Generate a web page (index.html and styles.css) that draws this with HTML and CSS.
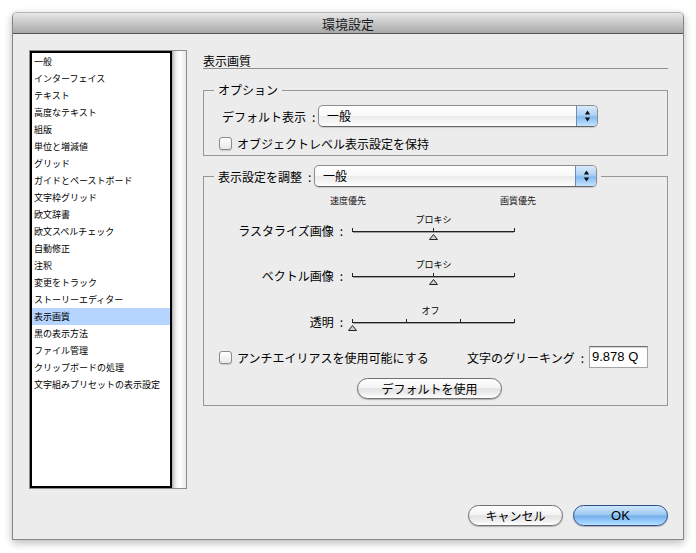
FILE: index.html
```html
<!DOCTYPE html>
<html lang="ja">
<head>
<meta charset="utf-8">
<title>環境設定</title>
<link rel="stylesheet" href="styles.css">
</head>
<body>
<div class="window">
  <div class="titlebar">環境設定</div>
  <div class="body">
    <div class="main">
      <div class="listbox">
        <ul class="list">
          <li>一般</li>
          <li>インターフェイス</li>
          <li>テキスト</li>
          <li>高度なテキスト</li>
          <li>組版</li>
          <li>単位と増減値</li>
          <li>グリッド</li>
          <li>ガイドとペーストボード</li>
          <li>文字枠グリッド</li>
          <li>欧文辞書</li>
          <li>欧文スペルチェック</li>
          <li>自動修正</li>
          <li>注釈</li>
          <li>変更をトラック</li>
          <li>ストーリーエディター</li>
          <li class="sel">表示画質</li>
          <li>黒の表示方法</li>
          <li>ファイル管理</li>
          <li>クリップボードの処理</li>
          <li>文字組みプリセットの表示設定</li>
        </ul>
        <div class="scroll"></div>
      </div>
      <div class="pane">
        <div class="pane-title">表示画質</div>
        <fieldset class="group g1">
          <legend>オプション</legend>
          <div class="row-default">
            <span class="lbl-default">デフォルト表示&#8194;:</span>
            <div class="popup popup-w1">
              <span class="popup-text">一般</span>
              <span class="popup-step"><svg width="7" height="14" viewBox="0 0 7 14"><path d="M0.8 5.5 3.5 1.5 6.2 5.5Z M0.8 8.5 3.5 12.5 6.2 8.5Z" fill="#111"/></svg></span>
            </div>
          </div>
          <div class="check-row"><span class="checkbox"></span><span>オブジェクトレベル表示設定を保持</span></div>
        </fieldset>
        <fieldset class="group g2">
          <legend>
            <span class="lbl-adjust">表示設定を調整&#8194;:</span>
            <span class="popup popup-w2">
              <span class="popup-text">一般</span>
              <span class="popup-step"><svg width="7" height="14" viewBox="0 0 7 14"><path d="M0.8 5.5 3.5 1.5 6.2 5.5Z M0.8 8.5 3.5 12.5 6.2 8.5Z" fill="#111"/></svg></span>
            </span>
          </legend>
          <div class="speed"><span>速度優先</span><span>画質優先</span></div>
          <div class="slider s1">
            <span class="val">プロキシ</span>
            <span class="slabel">ラスタライズ画像&#8194;:</span>
            <svg class="track" width="163" height="15" viewBox="0 0 163 15">
              <path d="M0.5 2v4M162.5 2v4M81.5 2v4M0 5.5h163" stroke="#222" fill="none"/>
              <path d="M1 6.5h161" stroke="#a0a0a0" fill="none"/>
              <path d="M77.5 13.5 81.5 8.5 85.5 13.5Z" fill="#cfcfcf" stroke="#222"/>
            </svg>
          </div>
          <div class="slider s2">
            <span class="val">プロキシ</span>
            <span class="slabel">ベクトル画像&#8194;:</span>
            <svg class="track" width="163" height="15" viewBox="0 0 163 15">
              <path d="M0.5 2v4M162.5 2v4M81.5 2v4M0 5.5h163" stroke="#222" fill="none"/>
              <path d="M1 6.5h161" stroke="#a0a0a0" fill="none"/>
              <path d="M77.5 13.5 81.5 8.5 85.5 13.5Z" fill="#cfcfcf" stroke="#222"/>
            </svg>
          </div>
          <div class="slider s3">
            <span class="val val-off">オフ</span>
            <span class="slabel">透明&#8194;:</span>
            <svg class="track" width="163" height="15" viewBox="0 0 163 15">
              <path d="M0.5 2v4M54.5 2v4M108.5 2v4M162.5 2v4M0 5.5h163" stroke="#222" fill="none"/>
              <path d="M1 6.5h161" stroke="#a0a0a0" fill="none"/>
              <path d="M-3.5 13.5 0.5 8.5 4.5 13.5Z" fill="#cfcfcf" stroke="#222"/>
            </svg>
          </div>
          <div class="aa-row">
            <div class="check"><span class="checkbox"></span><span>アンチエイリアスを使用可能にする</span></div>
            <div class="greek"><span>文字のグリーキング&#8194;:</span><span class="field">9.878 Q</span></div>
          </div>
          <div class="btn btn-default">デフォルトを使用</div>
        </fieldset>
      </div>
    </div>
    <div class="footer">
      <div class="btn">キャンセル</div>
      <div class="btn btn-ok">OK</div>
    </div>
  </div>
</div>
</body>
</html>
```
FILE: styles.css
```css
body {
  margin: 0;
  width: 696px;
  height: 553px;
  overflow: hidden;
  background: #fff;
  font-family: "Noto Sans CJK JP", "Liberation Sans", sans-serif;
  color: #000;
}

.window {
  margin: 12px 0 0 12px;
  width: 672px;
  height: 528px;
  box-sizing: border-box;
  border: 1px solid #858585;
  border-top-color: #b5b5b5;
  border-radius: 5px 5px 0 0;
  background: #ececec;
  box-shadow: 0 3px 9px rgba(0, 0, 0, 0.28);
  display: flex;
  flex-direction: column;
  overflow: hidden;
}

.titlebar {
  flex: none;
  height: 20px;
  border-bottom: 1px solid #555;
  background: linear-gradient(#e8e8e8, #a8a8a8);
  font-size: 13px;
  line-height: 21px;
  text-align: center;
  color: #1a1a1a;
}

.body {
  flex: 1;
  padding: 16px 15px 0 16px;
  display: flex;
  flex-direction: column;
}

.main {
  display: flex;
  gap: 16px;
  height: 439px;
}

.listbox {
  flex: none;
  width: 158px;
  box-sizing: border-box;
  border: 1px solid #8c8c8c;
  display: flex;
}

.list {
  flex: 1;
  margin: 0;
  padding: 0;
  list-style: none;
  border: 2px solid #000;
  background: #fff;
  font-size: 9px;
}

.list li {
  height: 17px;
  line-height: 17px;
  padding-left: 2px;
  white-space: nowrap;
}

.list li.sel {
  background: #b5d5ff;
}

.scroll {
  width: 14px;
  background: linear-gradient(90deg, #a9a9a9 0, #d8d8d8 2px, #f4f4f4 5px, #fff 8px, #e8e8e8 100%);
}

.pane {
  flex: none;
  width: 465px;
  font-size: 12px;
}

.pane-title {
  padding-top: 3px;
  line-height: 15px;
  border-bottom: 1px solid #8f8f8f;
}

.group {
  margin: 0;
  min-width: 0;
  border: 1px solid #979797;
  padding: 0 10px 4px;
}

.g1 {
  margin-top: 13px;
}

.g1 legend {
  padding: 0 4px;
  line-height: 16px;
}

.row-default {
  display: flex;
  align-items: center;
  margin-top: 7px;
  padding-left: 8px;
}

.lbl-default {
  flex: none;
  width: 96px;
  white-space: nowrap;
}

.popup {
  display: flex;
  height: 22px;
  box-sizing: border-box;
  border: 1px solid #8d8d8d;
  border-bottom-color: #666;
  border-radius: 5px;
  background: linear-gradient(#fff, #f8f8f8 50%, #ececec 52%, #fdfdfd);
  overflow: hidden;
  box-shadow: 0 1px 1px rgba(0, 0, 0, 0.15);
}

.popup-text {
  flex: 1;
  padding-left: 8px;
  line-height: 20px;
  font-size: 12px;
}

.popup-step {
  width: 20px;
  border-left: 1px solid #6a8bb5;
  background: linear-gradient(#d8ebfc, #aed2f6 45%, #83bbf0 55%, #c4e4ff);
  display: flex;
  align-items: center;
  justify-content: center;
}

.popup-w1 {
  width: 280px;
}

.popup-w2 {
  width: 283px;
}

.check-row {
  display: flex;
  align-items: center;
  gap: 5px;
  height: 15px;
  margin-top: 9px;
  padding-left: 5px;
  white-space: nowrap;
}

.checkbox {
  flex: none;
  width: 13px;
  height: 13px;
  box-sizing: border-box;
  border: 1px solid #8a8a8a;
  border-radius: 3px;
  background: linear-gradient(#fff, #e9e9e9);
  box-shadow: 0 1px 1px rgba(0, 0, 0, 0.15);
}

.g2 {
  margin-top: 9px;
  padding: 0 10px 6px;
}

.g2 legend {
  display: flex;
  align-items: center;
  padding: 0 4px;
}

.lbl-adjust {
  flex: none;
  width: 96px;
  white-space: nowrap;
}

.speed {
  display: flex;
  justify-content: space-between;
  width: 206px;
  margin: 8px 0 0 116px;
  font-size: 9px;
  line-height: 12px;
  color: #222;
}

.slider {
  display: grid;
  grid-template-columns: 129px 163px;
  grid-template-rows: 12px 15px;
  column-gap: 9px;
}

.s1 {
  margin-top: 7px;
}

.s2 {
  margin-top: 18px;
}

.s3 {
  margin-top: 19px;
}

.val {
  grid-column: 2;
  grid-row: 1;
  text-align: center;
  font-size: 9px;
  line-height: 12px;
}

.val-off {
  padding-right: 6px;
}

.slabel {
  grid-column: 1;
  grid-row: 2;
  text-align: right;
  line-height: 10px;
  white-space: nowrap;
}

.track {
  grid-column: 2;
  grid-row: 2;
  overflow: visible;
}

.aa-row {
  display: flex;
  align-items: center;
  justify-content: space-between;
  height: 22px;
  margin-top: 14px;
  padding: 0 9px 0 5px;
  white-space: nowrap;
}

.check,
.greek {
  display: flex;
  align-items: center;
  gap: 5px;
}

.field {
  width: 59px;
  height: 22px;
  box-sizing: border-box;
  border: 1px solid #a5a5a5;
  border-top-color: #707070;
  background: #fff;
  font-family: "Liberation Sans", sans-serif;
  font-size: 13px;
  line-height: 20px;
  padding-left: 2px;
  box-shadow: inset 0 1px 1px rgba(0, 0, 0, 0.18);
}

.btn {
  height: 21px;
  box-sizing: border-box;
  border: 1px solid #707070;
  border-radius: 11px;
  background: linear-gradient(#fff 0%, #f4f4f4 45%, #e2e2e2 52%, #f0f0f0 80%, #fff 100%);
  font-size: 12px;
  line-height: 19px;
  text-align: center;
  box-shadow: 0 1px 1px rgba(0, 0, 0, 0.25);
}

.btn-default {
  width: 145px;
  margin: 10px 0 0 143px;
}

.footer {
  display: flex;
  justify-content: flex-end;
  gap: 10px;
  margin-top: 16px;
}

.footer .btn {
  width: 95px;
}

.btn-ok {
  border-color: #2c4f86;
  background: linear-gradient(#cfe6fc 0%, #9fcaf4 45%, #74afec 52%, #a3d5ff 90%, #c6e6ff 100%);
  font-family: "Liberation Sans", sans-serif;
  font-size: 13px;
}
```
